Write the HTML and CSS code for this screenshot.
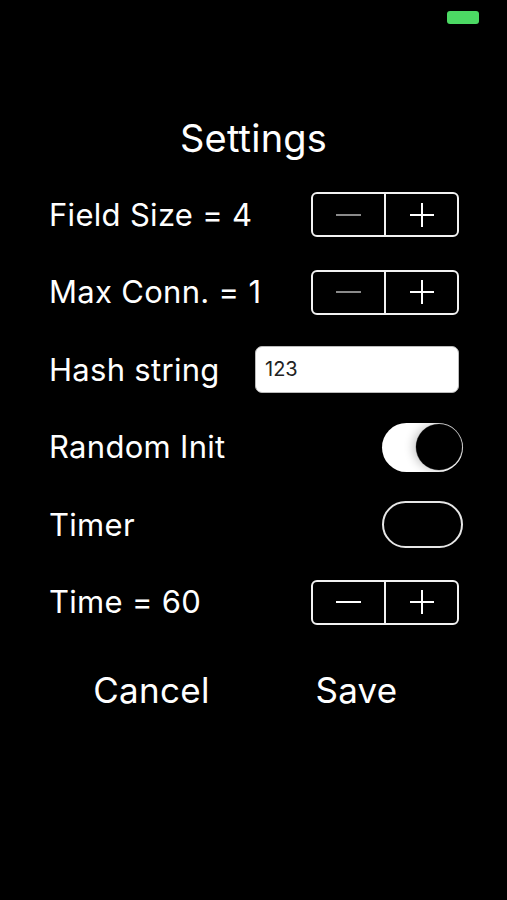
FILE: index.html
```html
<!DOCTYPE html>
<html>
<head>
<meta charset="utf-8">
<link rel="stylesheet" href="styles.css">
</head>
<body>
<div class="screen">
  <div class="status"><div class="battery"></div></div>
  <h1 class="title">Settings</h1>
  <div class="rows">
    <div class="row">
      <span class="label">Field Size = 4</span>
      <div class="stepper">
        <div class="seg"><span class="minus disabled"></span></div>
        <div class="seg"><span class="plus"></span></div>
      </div>
    </div>
    <div class="row">
      <span class="label">Max Conn. = 1</span>
      <div class="stepper">
        <div class="seg"><span class="minus disabled"></span></div>
        <div class="seg"><span class="plus"></span></div>
      </div>
    </div>
    <div class="row">
      <span class="label">Hash string</span>
      <div class="field">123</div>
    </div>
    <div class="row">
      <span class="label">Random Init</span>
      <div class="toggle on"><div class="knob"></div></div>
    </div>
    <div class="row">
      <span class="label">Timer</span>
      <div class="toggle off"></div>
    </div>
    <div class="row">
      <span class="label">Time = 60</span>
      <div class="stepper">
        <div class="seg"><span class="minus"></span></div>
        <div class="seg"><span class="plus"></span></div>
      </div>
    </div>
  </div>
  <div class="actions">
    <span class="btn">Cancel</span>
    <span class="btn">Save</span>
  </div>
</div>
</body>
</html>
```
FILE: styles.css
```css
html, body {
  margin: 0;
  padding: 0;
  background: #000;
}
body {
  width: 507px;
  height: 900px;
  overflow: hidden;
  font-family: Inter, "Liberation Sans", sans-serif;
  color: #fff;
}
.screen {
  display: flex;
  flex-direction: column;
}
.status {
  height: 34px;
  display: flex;
  justify-content: flex-end;
  align-items: flex-start;
  padding: 11px 28px 0 0;
  box-sizing: border-box;
}
.battery {
  width: 32px;
  height: 13px;
  border-radius: 3px;
  background: #4cd964;
}
.title {
  margin: 81.5px 0 0;
  height: 45px;
  line-height: 45px;
  font-size: 38px;
  font-weight: 400;
  letter-spacing: 0.2px;
  text-align: center;
}
.rows {
  margin-top: 15.25px;
  padding: 0 48px 0 49px;
  display: flex;
  flex-direction: column;
}
.row {
  height: 77.5px;
  display: flex;
  align-items: center;
  justify-content: space-between;
}
.label {
  font-size: 31px;
  line-height: 36px;
  letter-spacing: 0.3px;
}
.stepper {
  width: 148px;
  height: 45px;
  box-sizing: border-box;
  border: 2px solid #f2f2f2;
  border-radius: 6px;
  display: flex;
}
.seg {
  flex: 1;
  display: flex;
  align-items: center;
  justify-content: center;
  position: relative;
}
.seg + .seg {
  border-left: 2px solid #f2f2f2;
}
.minus {
  width: 25px;
  height: 2px;
  background: #fff;
}
.minus.disabled {
  background: #8a8a8a;
}
.plus {
  width: 24px;
  height: 24px;
  position: relative;
}
.plus::before, .plus::after {
  content: "";
  position: absolute;
  background: #fff;
}
.plus::before {
  left: 0;
  right: 0;
  top: 11px;
  height: 2px;
}
.plus::after {
  top: 0;
  bottom: 0;
  left: 11px;
  width: 2px;
}
.field {
  width: 204px;
  height: 47px;
  box-sizing: border-box;
  background: #fff;
  border: 1px solid #bbb;
  border-radius: 7px;
  color: #222;
  font-size: 20px;
  line-height: 45px;
  padding-left: 9px;
}
.toggle {
  width: 81px;
  box-sizing: border-box;
  margin-right: -4px;
  position: relative;
}
.toggle.on {
  height: 49px;
  border-radius: 25px;
  background: #fff;
  display: flex;
  align-items: center;
  justify-content: flex-end;
  padding-right: 1.5px;
}
.knob {
  width: 46px;
  height: 46px;
  border-radius: 50%;
  background: #000;
  box-shadow: -3px 0 10px rgba(0, 0, 0, 0.22), 0 0 0 0.5px rgba(0,0,0,0.3);
}
.toggle.off {
  height: 47px;
  border-radius: 24px;
  border: 2.5px solid #e6e6e6;
  background: #000;
}
.actions {
  margin-top: 26.75px;
  padding: 0 48px 0 49px;
  display: grid;
  grid-template-columns: 1fr 1fr;
}
.btn {
  text-align: center;
  font-size: 35px;
  line-height: 44px;
  letter-spacing: 0.3px;
}
```
